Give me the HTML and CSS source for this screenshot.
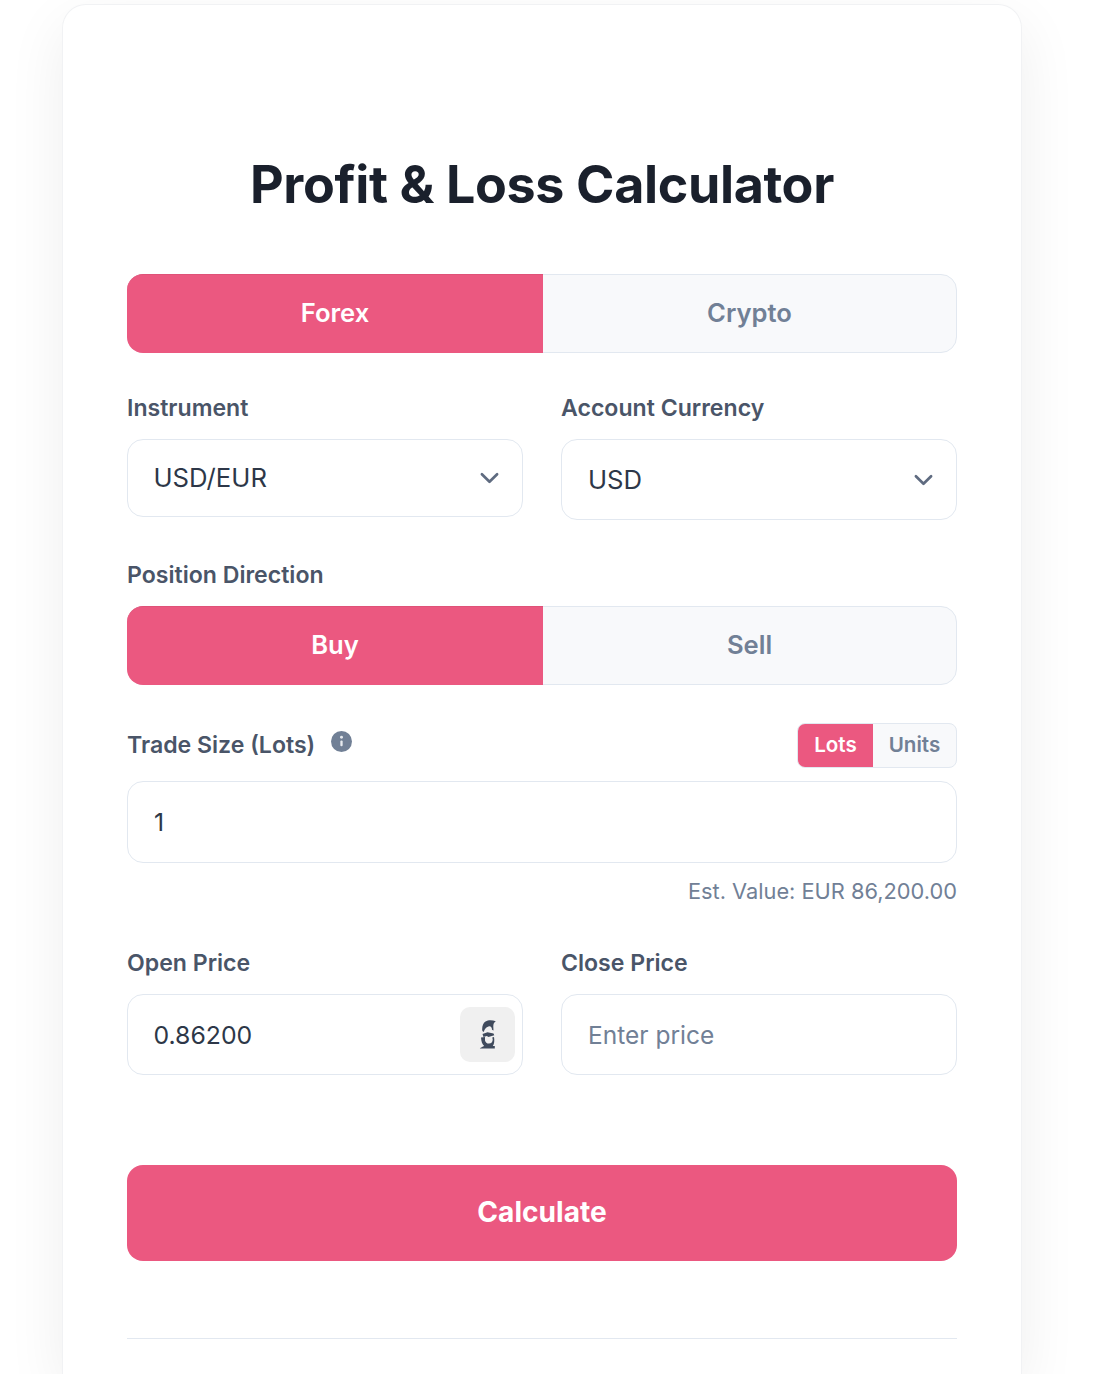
FILE: index.html
```html
<!DOCTYPE html>
<html lang="en">
<head>
<meta charset="utf-8">
<title>Profit &amp; Loss Calculator</title>
<link rel="stylesheet" href="styles.css">
</head>
<body>
<main class="card">
  <h1 class="title">Profit &amp; Loss Calculator</h1>
  <div class="segmented tabs">
    <button class="seg active">Forex</button>
    <button class="seg">Crypto</button>
  </div>
  <div class="two-col selects">
    <div class="field">
      <label class="label">Instrument</label>
      <div class="control select short"><span class="select-text">USD/EUR</span>
        <svg class="chevron" viewBox="0 0 20 12"><path d="M2 2l8 8 8-8" fill="none" stroke="#5f6b80" stroke-width="2.8" stroke-linecap="round" stroke-linejoin="round"/></svg>
      </div>
    </div>
    <div class="field">
      <label class="label">Account Currency</label>
      <div class="control select tall"><span>USD</span>
        <svg class="chevron" viewBox="0 0 20 12"><path d="M2 2l8 8 8-8" fill="none" stroke="#5f6b80" stroke-width="2.8" stroke-linecap="round" stroke-linejoin="round"/></svg>
      </div>
    </div>
  </div>
  <label class="label direction-label">Position Direction</label>
  <div class="segmented direction">
    <button class="seg active">Buy</button>
    <button class="seg">Sell</button>
  </div>
  <div class="size-head">
    <label class="label size-label">Trade Size (Lots)
      <svg class="info" viewBox="0 0 20 20"><circle cx="10" cy="10" r="10" fill="#718096"/><circle cx="10" cy="6" r="1.4" fill="#e8ebf0"/><rect x="8.9" y="9" width="2.2" height="5.5" rx="1" fill="#e8ebf0"/></svg>
    </label>
    <div class="mini-toggle">
      <span class="mini active">Lots</span>
      <span class="mini">Units</span>
    </div>
  </div>
  <div class="control wide"><span>1</span></div>
  <p class="estimate">Est. Value: EUR 86,200.00</p>
  <div class="two-col prices">
    <div class="field">
      <label class="label">Open Price</label>
      <div class="control price"><span class="price-text">0.86200</span>
        <span class="fetch">
          <svg class="bust" viewBox="0 0 17 29">
            <path fill="#3f4a5c" d="M6.500 1.500C9.500 -.2 13.500 .2 16.800 1.200 15 2.200 14.300 4 14.300 6.500L14.500 10.500 13 9.800C13 7 11.500 5.800 9.500 6.400 7 7.100 5.500 9 4.800 12 3.800 11.500 3.300 11 3.200 10 3 6.500 4 3 6.500 1.500Z"/>
            <path fill="#3f4a5c" d="M3.500 14L8.500 12.300 14.500 13.400 15.300 15.300 9.500 17 7.800 15.900 4.500 17Z"/>
            <path fill="#3f4a5c" d="M2 17.500L6 17 6 20.500C6.500 22.500 8 23.700 10 23.600 12.300 23.500 13.800 21.800 13.700 19.200L13.200 17.600 15 17C15.600 20.500 15.400 24 13.800 26L15.800 26V28.500H0.800C1.800 27.500 3.500 26.600 5.200 25.900 3.300 24.500 2.200 21.500 2 17.500Z"/>
          </svg>
        </span>
      </div>
    </div>
    <div class="field">
      <label class="label">Close Price</label>
      <div class="control price placeholder"><span>Enter price</span></div>
    </div>
  </div>
  <button class="calculate">Calculate</button>
  <hr class="divider">
</main>
</body>
</html>
```
FILE: styles.css
```css
* { box-sizing: border-box; }
html, body { margin: 0; height: 1374px; overflow: hidden; background: #fff; }
body { font-family: Inter, "Liberation Sans", sans-serif; color: #2d3748; padding: 4px 88px 0 62px; }
.card {
  background: #fff;
  border: 1px solid #f1f2f4;
  border-bottom: 0;
  border-radius: 24px 24px 0 0;
  box-shadow: 0 20px 60px rgba(0, 0, 0, 0.07);
  padding: 147px 64px 0;
  height: 1370px;
  overflow: hidden;
}
.title {
  margin: 0 0 56px;
  font-size: 52px;
  line-height: 66px;
  font-weight: 700;
  color: #1a202c;
  text-align: center;
  letter-spacing: -0.37px;
}
.segmented { display: flex; height: 79px; border: 1px solid #e2e8f0; border-radius: 16px; background: #f8f9fb; }
.seg { flex: 1 1 50%; border: 0; margin: 0; padding: 0 0 2px; background: transparent; font: 600 25.6px Inter, sans-serif; color: #718096; }
.seg.active { flex: 0 0 416px; margin: -1px 0 -1px -1px; padding-bottom: 4px; border-top: 1px solid #df5278; border-radius: 16px 0 0 16px; background: #eb5880; color: #fff; }
.two-col { display: grid; grid-template-columns: 396px 396px; column-gap: 38px; align-items: start; }
.selects { margin-top: 40px; }
.label { display: block; font-size: 23.1px; line-height: 30px; font-weight: 600; color: #4a5568; }
.field .label { margin-bottom: 16px; }
.control { display: flex; align-items: center; justify-content: space-between; border: 1px solid #e2e8f0; border-radius: 16px; padding: 0 26px; font-size: 24.8px; color: #2d3748; background: #fff; }
.select { font-size: 25.7px; }
.select-text { margin-left: -0.5px; margin-bottom: 2px; }
.price-text { margin-left: -0.5px; }
.short { height: 78px; }
.tall { height: 81px; }
.chevron { width: 19px; height: 12px; flex: none; margin-right: -3px; }
.direction-label { margin-top: 40px; margin-bottom: 16px; }
.size-head { display: flex; justify-content: space-between; align-items: center; margin-top: 38px; height: 45px; margin-bottom: 13px; }
.size-label { display: flex; align-items: center; margin-top: -2px; }
.info { width: 21px; height: 21px; margin-left: 16px; margin-top: -7px; }
.mini-toggle { display: flex; height: 45px; width: 160px; border: 1px solid #e2e8f0; border-radius: 8px; overflow: hidden; background: #f8f9fb; font-size: 20.6px; font-weight: 600; }
.mini { flex: 1; display: flex; align-items: center; justify-content: center; padding-bottom: 2px; color: #718096; }
.mini.active { flex: 0 0 75px; background: #eb5880; color: #fff; }
.wide { height: 82px; }
.estimate { margin: 14px 0 0; text-align: right; font-size: 21.8px; line-height: 28px; color: #718096; }
.prices { margin-top: 43px; }
.prices .label { margin-bottom: 16px; }
.price { height: 81px; padding-right: 7px; }
.placeholder { color: #718096; font-size: 24.5px; }
.fetch { width: 55px; height: 55px; border-radius: 10px; background: #f0f0f0; display: flex; align-items: center; justify-content: center; }
.bust { width: 17px; height: 29px; }
.calculate { display: block; width: 100%; height: 96px; margin-top: 90px; padding: 0 0 2px; border: 0; border-radius: 16px; background: #eb5880; color: #fff; font: 700 28.1px Inter, sans-serif; }
.divider { margin: 77px 0 0; border: 0; border-top: 1px solid #e2e8f0; }
```
